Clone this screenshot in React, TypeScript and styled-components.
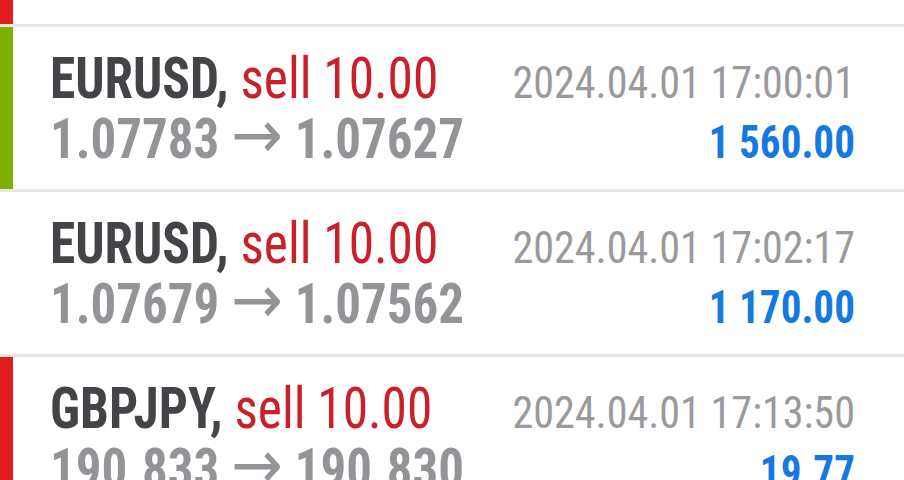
import React from "react";
import styled, { createGlobalStyle } from "styled-components";

const Global = createGlobalStyle`
  html, body { margin: 0; padding: 0; background: #ffffff; overflow: hidden; }
  body { font-family: "Roboto Condensed", Roboto, "Liberation Sans", sans-serif; }
`;

type Mark = "red" | "green";

type Trade = {
  symbol: string;
  side: string;
  volume: string;
  open: string;
  close: string;
  time: string;
  profit: string;
  mark?: Mark;
};

const trades: Trade[] = [
  { symbol: "EURUSD", side: "sell", volume: "10.00", open: "1.07800", close: "1.07700", time: "2024.04.01 16:50:00", profit: "1 000.00", mark: "red" },
  { symbol: "EURUSD", side: "sell", volume: "10.00", open: "1.07783", close: "1.07627", time: "2024.04.01 17:00:01", profit: "1 560.00", mark: "green" },
  { symbol: "EURUSD", side: "sell", volume: "10.00", open: "1.07679", close: "1.07562", time: "2024.04.01 17:02:17", profit: "1 170.00" },
  { symbol: "GBPJPY", side: "sell", volume: "10.00", open: "190.833", close: "190.830", time: "2024.04.01 17:13:50", profit: "19.77", mark: "red" },
];

const markColor: Record<Mark, string> = { red: "#e01c1f", green: "#7fb102" };

const List = styled.div`
  margin-top: -138px;
  display: flex;
  flex-direction: column;
`;

const Row = styled.div`
  display: flex;
  height: 165px;
  box-sizing: border-box;
  border-bottom: 3px solid #e6e6e6;
`;

const Bar = styled.div<{ $mark?: Mark }>`
  flex: 0 0 13px;
  background: ${(p) => (p.$mark ? markColor[p.$mark] : "transparent")};
`;

const Content = styled.div`
  flex: 1;
  min-width: 0;
  display: grid;
  grid-template-columns: minmax(0, 1fr) auto;
  grid-template-rows: auto auto;
  align-content: start;
  padding: 22px 49px 0 37px;
`;

const Title = styled.div`
  font-size: 58px;
  line-height: 59px;
  white-space: nowrap;
  align-self: baseline;
  transform: scaleX(0.886);
  transform-origin: left center;
`;

const Symbol = styled.span`
  font-weight: 700;
  color: #434348;
`;

const Side = styled.span`
  font-weight: 400;
  color: #c9202a;
`;

const Prices = styled.div`
  font-size: 56px;
  line-height: 52px;
  font-weight: 700;
  color: #939498;
  white-space: nowrap;
  align-self: baseline;
  transform: scaleX(0.91);
  transform-origin: left center;
`;

const Arrow = styled.span`
  font-family: "DejaVu Sans", sans-serif;
  font-weight: 400;
  font-size: 68px;
`;

const Time = styled.div`
  font-size: 44px;
  font-weight: 400;
  color: #9a9a9c;
  text-align: right;
  white-space: nowrap;
  align-self: baseline;
  transform: scaleX(0.957);
  transform-origin: right center;
`;

const Profit = styled.div`
  font-size: 46px;
  font-weight: 700;
  color: #1679e0;
  text-align: right;
  white-space: nowrap;
  align-self: baseline;
  transform: scaleX(0.894);
  transform-origin: right center;
`;

export default function App() {
  return (
    <>
      <Global />
      <List>
        {trades.map((t, i) => (
          <Row key={i}>
            <Bar $mark={t.mark} />
            <Content>
              <Title>
                <Symbol>{t.symbol},</Symbol> <Side>{t.side} {t.volume}</Side>
              </Title>
              <Time>{t.time}</Time>
              <Prices>
                {t.open} <Arrow>→</Arrow> {t.close}
              </Prices>
              <Profit>{t.profit}</Profit>
            </Content>
          </Row>
        ))}
      </List>
    </>
  );
}
